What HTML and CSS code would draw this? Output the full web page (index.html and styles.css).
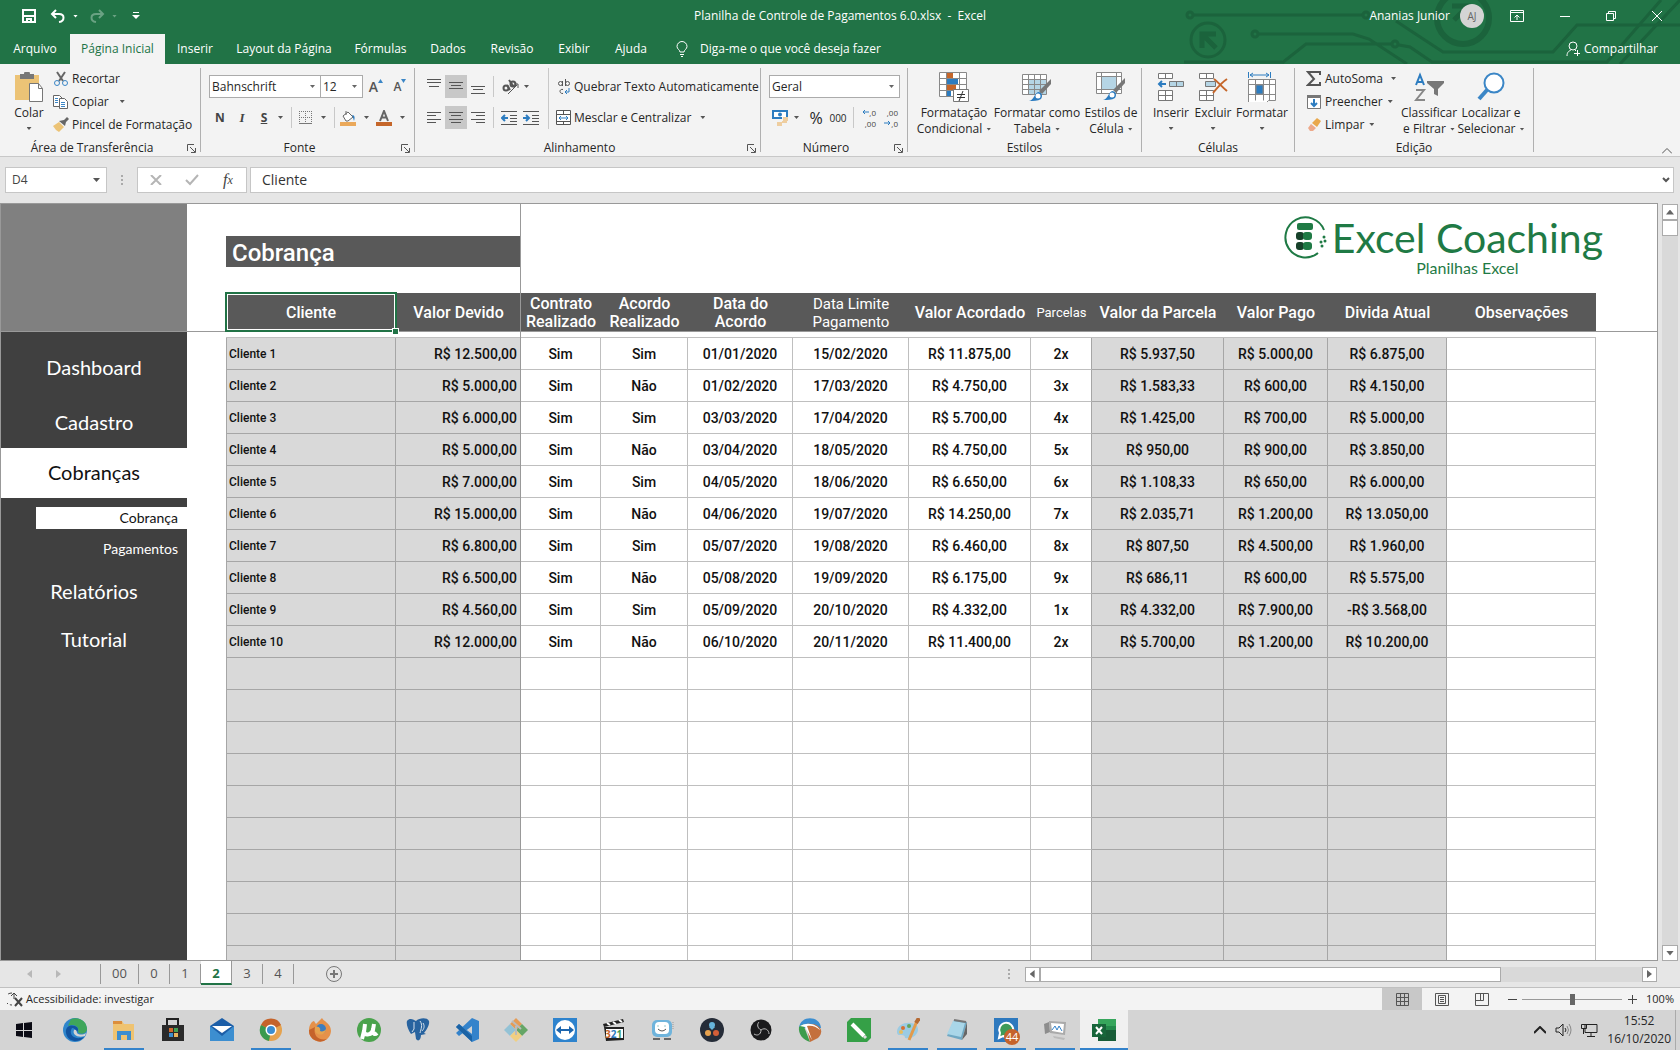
FILE: index.html
```html
<!DOCTYPE html>
<html lang="pt-BR">
<head>
<meta charset="utf-8">
<title>Planilha de Controle de Pagamentos 6.0.xlsx - Excel</title>
<link rel="stylesheet" href="styles.css">
</head>
<body>
<header class="top">
  <svg class="circuit" width="500" height="64" viewBox="1180 0 500 64" fill="none" stroke="#1b633c" stroke-width="3">
    <circle cx="1190" cy="15" r="3"/><path d="M1194 15H1363"/><circle cx="1366" cy="15" r="3"/>
    <path d="M1396 21l12 8 35 23h110l24-27h103" /><circle cx="1255" cy="34" r="3"/>
    <path d="M1259 34h94l16 5 38 25M1282 63l24-19h86"/><circle cx="1395" cy="44" r="3"/>
    <path d="M1399 45l11 2 22 15h175l54-62M1620 64l60-64M1184 62h98"/>
    <circle cx="1208" cy="40" r="17"/><circle cx="1463" cy="18" r="26" stroke-width="6"/>
    <path d="M1202 48V34h14M1202 34l14 14M1452 6h16v16M1468 6l-14 14" stroke-width="5"/>
  </svg>
  <div class="titlebar">
    <div class="quick">
      <button aria-label="Salvar"><svg width="14" height="14" fill="none" stroke="#fff" stroke-width="2"><path d="M1 1h12v12H1zM2 7h10"/><path d="M5 13v-3h4v3" /></svg></button>
      <button aria-label="Desfazer"><svg width="16" height="14" fill="none" stroke="#fff" stroke-width="2"><path d="M6 1L2 5l4 4M2 5h7c6 0 6 7 0 8"/></svg></button>
      <i class="caret light"></i>
      <button class="dim" aria-label="Refazer"><svg width="16" height="14" fill="none" stroke="#6aa283" stroke-width="2"><path d="M10 1l4 4-4 4M14 5H7C1 5 1 12 7 13"/></svg></button>
      <i class="caret dimmed"></i>
      <button aria-label="Personalizar"><svg width="8" height="8" fill="#fff"><path d="M1 0h6v1H1zM0 3h8L4 7z"/></svg></button>
    </div>
    <div class="doc">Planilha de Controle de Pagamentos 6.0.xlsx &nbsp;-&nbsp; Excel</div>
    <div class="window">
      <span>Ananias Junior</span><span class="avatar">AJ</span>
      <button aria-label="Opções da faixa"><svg width="14" height="12" fill="none" stroke="#fff"><path d="M.5 .5h13v11H.5zM.5 2.500h13M7 10V5M4.500 7.500L7 5l2.500 2.500"/></svg></button>
      <button aria-label="Minimizar"><svg width="10" height="10" stroke="#fff"><path d="M0 5.500h10"/></svg></button>
      <button aria-label="Restaurar"><svg width="10" height="10" fill="none" stroke="#fff"><path d="M.5 2.500h7v7h-7zM2.500 2.500v-2h7v7h-2"/></svg></button>
      <button aria-label="Fechar"><svg width="10" height="10" stroke="#fff"><path d="M0 0l10 10M10 0L0 10"/></svg></button>
    </div>
  </div>
  <nav class="tabs">
    <button>Arquivo</button><button class="active">Página Inicial</button><button>Inserir</button><button>Layout da Página</button><button>Fórmulas</button><button>Dados</button><button>Revisão</button><button>Exibir</button><button>Ajuda</button>
    <button class="tell"><svg width="12" height="17" fill="none" stroke="#fff"><path d="M4 11C4 9 1 8 1 5.500a5 5 0 0110 0C11 8 8 9 8 11zM4 13.500h4M5 15.500h2"/></svg>Diga-me o que você deseja fazer</button>
    <button class="share"><svg width="14" height="16" fill="none" stroke="#fff"><circle cx="7" cy="5" r="4"/><path d="M1 15c0-4 2-5 4-6M9 9l1 1M11.500 9v6M8 12.500h6"/></svg>Compartilhar</button>
  </nav>
</header>

<section class="ribbon">
  <div class="group clipboard">
    <div class="tools">
      <button class="big"><svg width="30" height="30" viewBox="0 0 30 30"><path d="M1 3h24v25H1z" fill="#ecc376"/><path d="M6 2h4a3 3 0 016 0h4v5H6z" fill="#777"/><path d="M15.500 11.500h9l4 5v13h-13z" fill="#fff" stroke="#777"/><path d="M24.500 11.500v5h4" fill="none" stroke="#777"/></svg><span>Colar</span><i class="caret"></i></button>
      <div class="list">
        <button><svg width="16" height="16" fill="none" stroke="#666" stroke-width="2"><path d="M4 1l6 9M12 1l-6 9"/><g stroke="#3b86c6" stroke-width="1"><circle cx="4" cy="12" r="2.500"/><circle cx="12" cy="12" r="2.500"/></g></svg>Recortar</button>
        <button><svg width="16" height="16" fill="#fff" stroke="#666"><path d="M.5 1.500h6l3 3v8h-9z"/><path d="M6.500 4.500h5l3 3v7h-8z"/><path d="M2 4.500h3M2 6.500h3M2 8.500h3M8 8.500h4M8 10.500h4M8 12.500h4" stroke="#3b86c6"/></svg>Copiar<i class="caret"></i></button>
        <button><svg width="16" height="16"><path d="M0 9l6-4 5 5-5 5-3-2z" fill="#ecc376"/><path d="M6 4l6 5 1-4 3-3-2-2-3 3z" fill="#666"/></svg>Pincel de Formatação</button>
      </div>
    </div>
    <div class="caption">Área de Transferência<svg class="launch" width="9" height="9"><path d="M.5 7V.5H7M3 3l5 5M8.500 4v4.500H4" fill="none" stroke="#555"/></svg></div>
  </div>

  <div class="group font">
    <div class="tools rows">
      <div class="row">
        <label class="combo face"><select aria-label="Fonte"><option>Bahnschrift</option></select></label>
        <label class="combo size"><select aria-label="Tamanho"><option>12</option></select></label>
        <button class="w26 grow">A<svg width="5" height="4"><path d="M0 4h5L2.500 0z" fill="#3b86c6"/></svg></button>
        <button class="w22 shrink">A<svg width="5" height="4"><path d="M0 0h5L2.500 4z" fill="#3b86c6"/></svg></button>
      </div>
      <div class="row">
        <button class="w22 strong">N</button><button class="w22 ital">I</button><button class="w22 under">S</button><i class="caret"></i><i class="sep"></i>
        <button class="w26" aria-label="Bordas"><svg width="13" height="13" stroke="#777" fill="none"><path d="M0 .5h13M.5 0v13M6.500 0v13M12.500 0v13M0 6.500h13" stroke-dasharray="1 1"/><path d="M0 12.500h13"/></svg></button><i class="caret"></i><i class="sep"></i>
        <button class="w26" aria-label="Preenchimento"><svg width="16" height="16"><path d="M3 6l5-4 5 5-5 4H6zM6 5V1" fill="#fff" stroke="#666"/><path d="M12 5c3 0 3 3 2 6-1-3-1-4-2-6z" fill="#2c7cc0"/><path d="M0 12h16v4H0z" fill="#eaa85a"/></svg></button><i class="caret"></i>
        <button class="w26" aria-label="Cor da fonte"><svg width="16" height="16"><path d="M4 11L8 1l4 10M5.500 7.500h5" fill="none" stroke="#666" stroke-width="2"/><path d="M0 12h16v4H0z" fill="#c5662a"/></svg></button><i class="caret"></i>
      </div>
    </div>
    <div class="caption">Fonte<svg class="launch" width="9" height="9"><path d="M.5 7V.5H7M3 3l5 5M8.500 4v4.500H4" fill="none" stroke="#555"/></svg></div>
  </div>

  <div class="group align">
    <div class="tools">
      <div class="rows">
        <div class="row">
          <button class="w22"><svg width="14" height="15" stroke="#555"><path d="M0 3.500h14M2 7.500h10M0 .5h14"/></svg></button>
          <button class="w22 on"><svg width="14" height="13" stroke="#555"><path d="M0 2.500h14M2 5.500h10M0 8.500h14"/></svg></button>
          <button class="w22"><svg width="14" height="15" stroke="#555"><path d="M0 7.500h14M2 10.500h10M0 14.500h14"/></svg></button><i class="sep"></i>
          <button class="w26"><svg width="18" height="16" fill="none" stroke="#555" stroke-width="2"><circle cx="4" cy="9" r="2.500"/><path d="M5 6l3 5M7 1l5 7"/><circle cx="11" cy="5" r="2.500"/><path d="M6 15l9-9M12 5h4v4" stroke-width="1"/></svg></button><i class="caret"></i>
        </div>
        <div class="row">
          <button class="w22"><svg width="14" height="13" stroke="#555"><path d="M0 1.500h14M0 4.500h9M0 8.500h14M0 11.500h9"/></svg></button>
          <button class="w22 on"><svg width="14" height="13" stroke="#555"><path d="M0 1.500h14M2 4.500h10M0 8.500h14M2 11.500h10"/></svg></button>
          <button class="w22"><svg width="14" height="13" stroke="#555"><path d="M0 1.500h14M5 4.500h9M0 8.500h14M5 11.500h9"/></svg></button><i class="sep"></i>
          <button class="w22"><svg width="16" height="14" stroke="#555"><path d="M0 .5h16M9 4.500h7M9 7.500h7M9 10.500h7M0 13.500h16"/><path d="M7 7H1M4 4L1 7l3 3" fill="none" stroke="#2c7cc0" stroke-width="2"/></svg></button>
          <button class="w22"><svg width="16" height="14" stroke="#555"><path d="M0 .5h16M9 4.500h7M9 7.500h7M9 10.500h7M0 13.500h16"/><path d="M0 7h6M3 4l3 3-3 3" fill="none" stroke="#2c7cc0" stroke-width="2"/></svg></button>
        </div>
      </div>
      <div class="rows wrapmerge">
        <button class="row"><svg width="16" height="16" fill="none" stroke="#555"><circle cx="4.500" cy="4.500" r="2"/><path d="M6.500 2v5M9.500 0v7M7 10.500c-4-1-4 4.500 0 4" /><circle cx="11.500" cy="4.500" r="2"/><path d="M13 9v4H9M11 11l-2 2 2 2" stroke="#2c7cc0"/></svg>Quebrar Texto Automaticamente</button>
        <button class="row"><svg width="16" height="16" fill="#fff" stroke="#555"><path d="M.5 .5h14v14H.5zM.5 4.500h14M.5 11.500h14M7.500 .5v4M7.500 11.500v3"/><path d="M3 8h9M5 6L3 8l2 2M10 6l2 2-2 2" fill="none" stroke="#2c7cc0"/></svg>Mesclar e Centralizar<i class="caret"></i></button>
      </div>
    </div>
    <div class="caption">Alinhamento<svg class="launch" width="9" height="9"><path d="M.5 7V.5H7M3 3l5 5M8.500 4v4.500H4" fill="none" stroke="#555"/></svg></div>
  </div>

  <div class="group number">
    <div class="tools rows">
      <div class="row"><label class="combo general"><select aria-label="Formato"><option>Geral</option></select></label></div>
      <div class="row">
        <button class="w22"><svg width="16" height="16"><path d="M1 1h14v7H1z" fill="#fff" stroke="#2c7cc0" stroke-width="2"/><circle cx="8" cy="4.500" r="2" fill="#2c7cc0"/><path d="M10 7h6v6h-3v3H5v-4h5z" fill="#f3f3f3"/><path d="M11 8h5M11 10h5M10 12h5M5 13h5M5 15h5" stroke="#e9a84c"/></svg></button><i class="caret"></i>
        <button class="w22 pct">%</button><button class="w22 thou">000</button><i class="sep"></i>
        <button class="w22 dec"><span><svg width="7" height="6"><path d="M7 3H1M3 1L1 3l2 2" fill="none" stroke="#2c7cc0"/></svg>,0</span><span>,00</span></button>
        <button class="w22 dec"><span>,00</span><span><svg width="7" height="6"><path d="M0 3h6M4 1l2 2-2 2" fill="none" stroke="#2c7cc0"/></svg>,0</span></button>
      </div>
    </div>
    <div class="caption">Número<svg class="launch" width="9" height="9"><path d="M.5 7V.5H7M3 3l5 5M8.500 4v4.500H4" fill="none" stroke="#555"/></svg></div>
  </div>

  <div class="group styles">
    <div class="tools">
      <button class="big"><svg width="30" height="30"><path d="M.5 .5h27v24H.5zM.5 6.500h27M.5 12.500h27M.5 18.500h27M7.500 .5v24M20.500 .5v24" fill="#fff" stroke="#888"/><path d="M8 1h6v5H8zM8 13h9v5H8z" fill="#c5662a"/><path d="M8 7h11v5H8zM8 19h4v5H8z" fill="#2c7cc0"/><path d="M14.500 17.500h15v12h-15z" fill="#fff" stroke="#777"/><path d="M18 22.500h8M18 25.500h8M24 19l-4 10" stroke="#333"/></svg><span>Formatação</span><span>Condicional<i class="caret"></i></span></button>
      <button class="big"><svg width="30" height="30"><path d="M.5 2.500h24v20H.5z" fill="#fff"/><path d="M7 8h17v14H7z" fill="#b5d5e5"/><path d="M.5 2.500h24v20H.5zM.5 7.500h24M.5 12.500h24M.5 17.500h24M6.500 2.500v20M12.500 2.500v20M18.500 2.500v20" fill="none" stroke="#888"/><path d="M29 7v5l-9 10-3-3z" fill="#777"/><path d="M7 29c5-1 5-7 9-9 4 0 5 4 3 7-3 2-8 2-12 2z" fill="#2c7cc0"/><circle cx="16" cy="24" r="2.500" fill="#fff"/></svg><span>Formatar como</span><span>Tabela<i class="caret"></i></span></button>
      <button class="big"><svg width="30" height="30"><path d="M.5 .5h25v21H.5zM.5 4.500h25M.5 17.500h25M5.500 .5v21M20.500 .5v21" fill="#fff" stroke="#888"/><path d="M6 5h14v12H6z" fill="#b5d5e5"/><path d="M29 6v5l-9 10-3-3z" fill="#777"/><path d="M7 28c5-1 5-7 9-9 4 0 5 4 3 7-3 2-8 2-12 2z" fill="#2c7cc0"/><circle cx="16" cy="23" r="2.500" fill="#fff"/></svg><span>Estilos de</span><span>Célula<i class="caret"></i></span></button>
    </div>
    <div class="caption">Estilos</div>
  </div>

  <div class="group cells">
    <div class="tools">
      <button class="big"><svg width="28" height="30" fill="#fff" stroke="#777"><path d="M1.500 1.500h14v5h-14zM8.500 1.500v5M1.500 18.500h14v10h-14zM1.500 23.500h14M8.500 18.500v10"/><path d="M12.500 9.500h14v5h-14zM19.500 9.500v5" fill="#b5d5e5"/><path d="M9 12H3M5 9l-3 3 3 3" stroke="#2c7cc0" fill="none" stroke-width="2"/></svg><span>Inserir</span><i class="caret"></i></button>
      <button class="big"><svg width="30" height="30" fill="#fff" stroke="#777"><path d="M1.500 1.500h14v5h-14zM8.500 1.500v5M1.500 18.500h14v10h-14zM1.500 23.500h14M8.500 18.500v10"/><path d="M7.500 9.500h10v5h-10z" fill="#b5d5e5"/><path d="M16 7c4 3 8 8 13 12M29 7c-6 4-9 8-14 14" stroke="#c5662a" stroke-width="2" fill="none"/></svg><span>Excluir</span><i class="caret"></i></button>
      <button class="big"><svg width="28" height="32" fill="none" stroke="#888"><path d="M.5 7.500h27v21h-7l-3 3H.5zM.5 12.500h27M.5 22.500h27M7.500 7.500v21M15.500 7.500v21M21.500 7.500v21" fill="#fff"/><path d="M8 13h7v9H8z" fill="#2c7cc0"/><path d="M.5 0v6M22.500 0v6M2 3h19M5 1L2 3l3 2M18 1l3 2-3 2" stroke="#2c7cc0"/></svg><span>Formatar</span><i class="caret"></i></button>
    </div>
    <div class="caption">Células</div>
  </div>

  <div class="group edit">
    <div class="tools">
      <div class="list">
        <button class="wide"><svg width="16" height="16"><path d="M14 4V1H2l6 7-6 6h12v-3" fill="none" stroke="#555" stroke-width="2"/></svg>AutoSoma<i class="caret"></i></button>
        <button><svg width="16" height="16"><path d="M1.500 1.500h13v13h-13z" fill="#fff" stroke="#777"/><path d="M1 1h14v3H1z" fill="#777"/><path d="M8 5v7M5 9l3 3 3-3" fill="none" stroke="#2c7cc0" stroke-width="2"/></svg>Preencher<i class="caret"></i></button>
        <button><svg width="16" height="16"><path d="M6 6l5-5 4 3-4 6z" fill="#e9a84c"/><path d="M5 7l5 4-3 3H4l-2-3z" fill="#eda98a"/></svg>Limpar<i class="caret"></i></button>
      </div>
      <button class="big"><svg width="30" height="30"><path d="M2 13L6 3l4 10M3 10h6" stroke="#2c7cc0" fill="none" stroke-width="2"/><path d="M2 18h8L2 28h9" stroke="#888" fill="none" stroke-width="2"/><path d="M13 9h17v2l-6 6v7l-4-2v-5l-7-6z" fill="#777"/></svg><span>Classificar</span><span>e Filtrar<i class="caret"></i></span></button>
      <button class="big"><svg width="30" height="30"><circle cx="18" cy="11" r="9.500" fill="#fff" stroke="#3b86c6" stroke-width="2"/><path d="M11 18l-8 9" stroke="#3b86c6" stroke-width="4"/></svg><span>Localizar e</span><span>Selecionar<i class="caret"></i></span></button>
    </div>
    <div class="caption">Edição</div>
  </div>
  <button class="collapse" aria-label="Recolher"><svg width="10" height="6"><path d="M0 5.500l5-5 5 5" fill="none" stroke="#555"/></svg></button>
</section>

<section class="formula">
  <label class="namebox"><input value="D4" aria-label="Caixa de nome"><i class="caret large"></i></label>
  <span class="dots"></span>
  <div class="fx">
    <button aria-label="Cancelar"><svg width="12" height="10" stroke="#b5b5b5" stroke-width="2"><path d="M1 0l10 10M11 0L1 10"/></svg></button>
    <button aria-label="Inserir"><svg width="14" height="12" stroke="#b5b5b5" stroke-width="2" fill="none"><path d="M1 6l4 4 8-9"/></svg></button>
    <button class="func">f<small>x</small></button>
  </div>
  <label class="bar"><input value="Cliente" aria-label="Barra de fórmulas"><svg width="8" height="6"><path d="M1 1l3 3 3-3" fill="none" stroke="#555" stroke-width="2"/></svg></label>
</section>

<main class="workspace">
  <div class="sheet">
    <aside class="side">
      <div class="block"></div>
      <nav>
        <a href="#d">Dashboard</a><a href="#c">Cadastro</a><a class="current" href="#b">Cobranças</a>
        <a class="sub current" href="#b1">Cobrança</a><a class="sub" href="#b2">Pagamentos</a>
        <a href="#r">Relatórios</a><a href="#t">Tutorial</a>
      </nav>
    </aside>
    <div class="content">
      <div class="heading">
        <h1>Cobrança</h1>
        <div class="logo">
          <svg width="44" height="44" viewBox="0 0 44 44"><path d="M40 15A20 20 0 1 0 34 38" fill="none" stroke="#1f7a45" stroke-width="2"/><g fill="#1f7a45"><rect x="13" y="8" width="16" height="7" rx="2"/><rect x="12" y="17" width="8" height="8" rx="3" fill="#17412a"/><rect x="19" y="17" width="9" height="8" rx="3"/><rect x="12" y="27" width="8" height="8" rx="3" fill="#17412a"/><rect x="19" y="27" width="9" height="8" rx="3"/><circle cx="40" cy="22" r="1.500"/><circle cx="41" cy="26" r="1.500"/><circle cx="37" cy="27" r="1.500"/><circle cx="38" cy="31" r="1.500"/></g></svg>
          <div><strong>Excel Coaching</strong><span>Planilhas Excel</span></div>
        </div>
      </div>
      <table>
        <colgroup><col class="c1"><col class="c2"><col class="c3"><col class="c4"><col class="c5"><col class="c6"><col class="c7"><col class="c8"><col class="c9"><col class="c10"><col class="c11"><col></colgroup>
        <thead>
          <tr><th class="selected">Cliente</th><th>Valor Devido</th><th>Contrato Realizado</th><th>Acordo Realizado</th><th>Data do Acordo</th><th class="mid">Data Limite Pagamento</th><th>Valor Acordado</th><th class="tiny">Parcelas</th><th>Valor da Parcela</th><th>Valor Pago</th><th>Divida Atual</th><th>Observações</th></tr>
          <tr class="gap"><td colspan="12"></td></tr>
        </thead>
        <tbody>
          <tr><td>Cliente 1</td><td>R$ 12.500,00</td><td>Sim</td><td>Sim</td><td>01/01/2020</td><td>15/02/2020</td><td>R$ 11.875,00</td><td>2x</td><td>R$ 5.937,50</td><td>R$ 5.000,00</td><td>R$ 6.875,00</td><td></td></tr>
          <tr><td>Cliente 2</td><td>R$ 5.000,00</td><td>Sim</td><td>Não</td><td>01/02/2020</td><td>17/03/2020</td><td>R$ 4.750,00</td><td>3x</td><td>R$ 1.583,33</td><td>R$ 600,00</td><td>R$ 4.150,00</td><td></td></tr>
          <tr><td>Cliente 3</td><td>R$ 6.000,00</td><td>Sim</td><td>Sim</td><td>03/03/2020</td><td>17/04/2020</td><td>R$ 5.700,00</td><td>4x</td><td>R$ 1.425,00</td><td>R$ 700,00</td><td>R$ 5.000,00</td><td></td></tr>
          <tr><td>Cliente 4</td><td>R$ 5.000,00</td><td>Sim</td><td>Não</td><td>03/04/2020</td><td>18/05/2020</td><td>R$ 4.750,00</td><td>5x</td><td>R$ 950,00</td><td>R$ 900,00</td><td>R$ 3.850,00</td><td></td></tr>
          <tr><td>Cliente 5</td><td>R$ 7.000,00</td><td>Sim</td><td>Sim</td><td>04/05/2020</td><td>18/06/2020</td><td>R$ 6.650,00</td><td>6x</td><td>R$ 1.108,33</td><td>R$ 650,00</td><td>R$ 6.000,00</td><td></td></tr>
          <tr><td>Cliente 6</td><td>R$ 15.000,00</td><td>Sim</td><td>Não</td><td>04/06/2020</td><td>19/07/2020</td><td>R$ 14.250,00</td><td>7x</td><td>R$ 2.035,71</td><td>R$ 1.200,00</td><td>R$ 13.050,00</td><td></td></tr>
          <tr><td>Cliente 7</td><td>R$ 6.800,00</td><td>Sim</td><td>Sim</td><td>05/07/2020</td><td>19/08/2020</td><td>R$ 6.460,00</td><td>8x</td><td>R$ 807,50</td><td>R$ 4.500,00</td><td>R$ 1.960,00</td><td></td></tr>
          <tr><td>Cliente 8</td><td>R$ 6.500,00</td><td>Sim</td><td>Não</td><td>05/08/2020</td><td>19/09/2020</td><td>R$ 6.175,00</td><td>9x</td><td>R$ 686,11</td><td>R$ 600,00</td><td>R$ 5.575,00</td><td></td></tr>
          <tr><td>Cliente 9</td><td>R$ 4.560,00</td><td>Sim</td><td>Sim</td><td>05/09/2020</td><td>20/10/2020</td><td>R$ 4.332,00</td><td>1x</td><td>R$ 4.332,00</td><td>R$ 7.900,00</td><td>-R$ 3.568,00</td><td></td></tr>
          <tr><td>Cliente 10</td><td>R$ 12.000,00</td><td>Sim</td><td>Não</td><td>06/10/2020</td><td>20/11/2020</td><td>R$ 11.400,00</td><td>2x</td><td>R$ 5.700,00</td><td>R$ 1.200,00</td><td>R$ 10.200,00</td><td></td></tr>
          <tr><td></td><td></td><td></td><td></td><td></td><td></td><td></td><td></td><td></td><td></td><td></td><td></td></tr>
          <tr><td></td><td></td><td></td><td></td><td></td><td></td><td></td><td></td><td></td><td></td><td></td><td></td></tr>
          <tr><td></td><td></td><td></td><td></td><td></td><td></td><td></td><td></td><td></td><td></td><td></td><td></td></tr>
          <tr><td></td><td></td><td></td><td></td><td></td><td></td><td></td><td></td><td></td><td></td><td></td><td></td></tr>
          <tr><td></td><td></td><td></td><td></td><td></td><td></td><td></td><td></td><td></td><td></td><td></td><td></td></tr>
          <tr><td></td><td></td><td></td><td></td><td></td><td></td><td></td><td></td><td></td><td></td><td></td><td></td></tr>
          <tr><td></td><td></td><td></td><td></td><td></td><td></td><td></td><td></td><td></td><td></td><td></td><td></td></tr>
          <tr><td></td><td></td><td></td><td></td><td></td><td></td><td></td><td></td><td></td><td></td><td></td><td></td></tr>
          <tr><td></td><td></td><td></td><td></td><td></td><td></td><td></td><td></td><td></td><td></td><td></td><td></td></tr>
          <tr><td></td><td></td><td></td><td></td><td></td><td></td><td></td><td></td><td></td><td></td><td></td><td></td></tr>
        </tbody>
      </table>
    </div>
    <i class="freeze-h"></i><i class="freeze-v"></i>
  </div>
  <div class="vscroll"><button aria-label="Acima"><i class="tri up"></i></button><div class="thumb"></div><span class="track"></span><button aria-label="Abaixo"><i class="tri down"></i></button></div>
</main>

<section class="sheetbar">
  <div class="arrows"><i class="tri left faint"></i><i class="tri right faint"></i></div>
  <div class="sheets"><button class="double">00</button><button>0</button><button>1</button><button class="active">2</button><button>3</button><button>4</button></div>
  <button class="add" aria-label="Nova planilha"><svg width="16" height="16" fill="none" stroke="#777"><circle cx="8" cy="8" r="7.500"/><path d="M8 4v8M4 8h8" stroke-width="2"/></svg></button>
  <span class="dots push"></span>
  <div class="hscroll"><button aria-label="Esquerda"><i class="tri left"></i></button><div class="thumb"></div><span class="track"></span><button aria-label="Direita"><i class="tri right"></i></button></div>
</section>

<section class="status">
  <svg width="17" height="15" fill="none" stroke="#444"><path d="M5 1a7 6 0 000 12" stroke-dasharray="4 2"/><path d="M7 1v6M4 4l3-3 3 3" /><path d="M8 6l7 8M15 6l-7 8" stroke-width="2"/></svg>
  <span>Acessibilidade: investigar</span>
  <div class="views">
    <button class="on" aria-label="Normal"><svg width="13" height="13" fill="none" stroke="#555"><path d="M.5 .5h12v12H.5zM.5 4.500h12M.5 8.500h12M4.500 .5v12M8.500 .5v12"/></svg></button>
    <button aria-label="Layout"><svg width="14" height="13" fill="none" stroke="#555"><path d="M.5 .5h13v12H.5zM3.500 2.500h7v8h-7zM5 4.500h4M5 6.500h4M5 8.500h4"/></svg></button>
    <button aria-label="Quebra"><svg width="14" height="13" fill="none" stroke="#555"><path d="M.5 .5h13v12H.5zM5.500 .5v7M.5 7.500h8v-7"/></svg></button>
  </div>
  <button class="zoomb" aria-label="Menos"><svg width="9" height="9" stroke="#444"><path d="M0 4.500h9"/></svg></button>
  <input type="range" min="0" max="100" value="50" aria-label="Zoom">
  <button class="zoomb" aria-label="Mais"><svg width="9" height="9" stroke="#444"><path d="M0 4.500h9M4.500 0v9"/></svg></button>
  <span class="pct100">100%</span>
</section>

<footer class="taskbar">
  <button class="start"><svg width="16" height="16" fill="#0b0b14"><path d="M0 2l7-1v7H0zM8 1l8-1v8H8zM0 9h7v6l-7-1zM8 9h8v7l-8-1z"/></svg></button>
  <button><svg width="24" height="24"><circle cx="12" cy="12" r="12" fill="#2f86cc"/><path d="M8 1c9-3 16 3 16 10 0 5-7 6-9 3 2-5-4-9-10-6z" fill="#3fa65a"/><path d="M9 10c-4 6 2 13 12 9-4 6-16 6-18-4-1-5 3-9 9-7 3 1 4 4 2 6-1-2-3-4-5-4z" fill="#1254a0"/><path d="M11 12c1-1 3 0 3 3 2 2 6 2 9 0l-1 3c-7 2-13-1-11-6z" fill="#d4d4d4"/></svg></button>
  <button class="open"><svg width="24" height="22"><path d="M1 2h9l2 3h10v16H1z" fill="#efc371"/><path d="M1 2h9v3H1z" fill="#dc8e3c"/><path d="M5 12h14v9h-4v-5H9v5H5z" fill="#3c8ed0"/></svg></button>
  <button><svg width="24" height="24"><path d="M6 7V1h11v6" fill="none" stroke="#222" stroke-width="2"/><path d="M1 7h22v16H1z" fill="#2a2a2a"/><path d="M8 10h4v4H8z" fill="#d2682c"/><path d="M13 10h4v4h-4z" fill="#43a052"/><path d="M8 15h4v4H8z" fill="#3c8ed0"/><path d="M13 15h4v4h-4z" fill="#eab35c"/></svg></button>
  <button><svg width="24" height="24"><path d="M0 8l12-8 12 8v15H0z" fill="#1c5ea8"/><path d="M0 8v15h24V8L12 18z" fill="#3c8ed0"/><path d="M2 8h20l-10 7z" fill="#fff"/></svg></button>
  <button class="open"><svg width="24" height="24"><circle cx="12" cy="12" r="11" fill="#e5a24e"/><path d="M12 12L2 7A11 11 0 0122 7z" fill="#c5632b"/><path d="M12 12L2 7a11 11 0 008 16z" fill="#3a9a4e"/><circle cx="12" cy="12" r="5.500" fill="#fff"/><circle cx="12" cy="12" r="4" fill="#3c8ed0"/></svg></button>
  <button><svg width="24" height="24"><path d="M1 12C1 7 4 3 6 3l2 3 6-6c1 3 9 5 9 13a11 11 0 01-22-1z" fill="#e5914a"/><path d="M1 12a11 11 0 0018 9C10 23 5 17 7 9z" fill="#c5632b"/><circle cx="13" cy="11" r="5" fill="#3c7dc0"/><path d="M7 9c4-1 6 1 5 4 2 1 5 0 6-2 0 6-8 8-11 2z" fill="#e5a24e"/></svg></button>
  <button><svg width="24" height="24"><circle cx="12" cy="12" r="12" fill="#4aa34c"/><path d="M8 6l-1 8c1 4 8 3 9-2l1-6M16 11c-1 5 2 6 4 4M7 13L5 21" fill="none" stroke="#fff" stroke-width="4"/></svg></button>
  <button><svg width="24" height="24"><path d="M1 3c3-4 7-1 9 0 3-3 11-4 13 0 1 4-3 10-5 12l2 1-5 1c0 5-3 7-5 4l-1-7-4 2C2 12 0 6 1 3z" fill="#28639f"/><path d="M8 4v7l-2 3M14 3c3 4 1 8 0 12M17 5c2 3 1 6-1 8" fill="none" stroke="#d4e0ea"/></svg></button>
  <button><svg width="24" height="24"><path d="M17 0l7 3v18l-7 3L1 9l3-3 13 10V8L4 18l-3-3z" fill="#3483cb"/><path d="M1 9l3-3 13 12v6z" fill="#1b63a5"/></svg></button>
  <button><svg width="24" height="24"><path d="M12 0l6 6-6 6-6-6z" fill="#e59c56"/><path d="M6 6l6 6-6 6-6-6z" fill="#93c2d5"/><path d="M18 6l6 6-6 6-6-6z" fill="#65a667"/><path d="M12 12l6 6-6 6-6-6z" fill="#f0cf82"/><path d="M8 3l9 8M12 8v9" stroke="#bbb" stroke-width="2"/></svg></button>
  <button><svg width="24" height="24"><path d="M0 0h24v24H0z" fill="#2e83cd"/><circle cx="12" cy="12" r="10" fill="#fff"/><path d="M3 12l5-4v3h8V8l5 4-5 4v-3H8v3z" fill="#1b65ae"/></svg></button>
  <button><svg width="24" height="24"><path d="M1 6l20-5 1 3-20 5zM2 9h20v13l-18 1z" fill="#222"/><path d="M4 11h17v9H4z" fill="#fff"/><path d="M5 5l3 2M11 4l3 2M17 2l3 2" stroke="#fff" stroke-width="2"/></svg><span class="clap"><b>3</b><b>2</b><b>1</b></span></button>
  <button><svg width="24" height="24"><rect x="1" y="2" width="20" height="17" rx="5" fill="#6fb4dc"/><rect x="4" y="4" width="14" height="12" rx="4" fill="#fff"/><path d="M7 11q4 4 8 0" stroke="#555" fill="none"/><path d="M7 7v2M14 7v2" stroke="#9cc" stroke-width="1"/><path d="M2 21h7M13 21h7" stroke="#666" stroke-width="2"/><path d="M22 4v8" stroke="#999" stroke-dasharray="1 1"/></svg></button>
  <button><svg width="24" height="24"><circle cx="12" cy="12" r="12" fill="#252c38"/><circle cx="12" cy="7" r="3" fill="#66b4da"/><path d="M12 12L9 9h6z" fill="#66b4da"/><circle cx="8" cy="15" r="3" fill="#e6a14d"/><circle cx="16" cy="15" r="3" fill="#d35e38"/></svg></button>
  <button><svg width="22" height="22"><circle cx="11" cy="11" r="10.500" fill="#1b1b1d"/><path d="M11 11C7 9 7 5 9 3M11 11c4-3 8 0 8 4M11 11c0 5-4 6-7 4" fill="none" stroke="#bbb"/></svg></button>
  <button><svg width="24" height="24"><path d="M1 10C2-3 22-3 23 10z" fill="#3c8ed0"/><path d="M1 9l4-3 7 18C5 22 0 16 1 9z" fill="#3d9c4d"/><path d="M8 6c12-2 20 6 12 14l-8 4z" fill="#c4703d"/><path d="M2 8c8-5 18-1 20 4-4-4-9-5-13-4l5 14L7 9z" fill="#fff"/></svg></button>
  <button><svg width="24" height="24"><path d="M4 0h20v20l-4 4H0V4z" fill="#35a047"/><path d="M5 6l12 12" stroke="#fff" stroke-width="4"/><path d="M17 18l2 2" stroke="#ddd" stroke-width="3"/></svg></button>
  <button class="open"><svg width="24" height="24"><path d="M1 13C2 5 15 2 21 8c4 6-4 14-12 12 0-3-2-3-5-3s-3-2-3-4z" fill="#9bcbe3"/><circle cx="7" cy="10" r="2" fill="#d86e31"/><circle cx="13" cy="8" r="2" fill="#61a45d"/><circle cx="5" cy="14" r="2" fill="#e9bd5d"/><path d="M21 3l-8 19" stroke="#e39a4a" stroke-width="3"/><path d="M20 5l3-5" stroke="#b56a33" stroke-width="4"/></svg></button>
  <button class="open"><svg width="24" height="24"><path d="M9 2l13 2-5 18-15-4z" fill="#6fa8c3"/><path d="M8 3l12 2-4 14-14-3z" fill="#a9d6e8"/><path d="M22 4v12l-5 6z" fill="#666"/><path d="M9 2l12 2" stroke="#777" stroke-width="2"/></svg></button>
  <button class="open"><svg width="24" height="24"><path d="M0 0h24v24H0z" fill="#2e79be"/><path d="M5 20l1-5a7 7 0 113 3z" fill="#3f9b59" stroke="#fff" stroke-width="2"/></svg><span class="badge">44</span></button>
  <button class="open"><svg width="24" height="24"><path d="M1 6l5-2 1 10-5 2z" fill="#8d8d8d"/><path d="M6 3l17 1-1 13-15-2z" fill="#aaa"/><path d="M8 5l13 1-1 9-11-2z" fill="#fff"/><path d="M9 12l3-4 2 4 2-4 3 5" stroke="#3483cb" fill="none"/><path d="M10 18l12 2-1 2-10-2z" fill="#bbb"/></svg></button>
  <button class="open active"><svg width="24" height="22"><path d="M6 0h18v22H6z" fill="#238a4b"/><path d="M6 0h18v7H6z" fill="#36a65c"/><path d="M6 11h18v11H6z" fill="#185c37"/><path d="M0 5h14v13H0z" fill="#17653a"/><path d="M4 8l6 7M10 8l-6 7" stroke="#fff" stroke-width="2"/></svg></button>
  <div class="tray">
    <svg width="12" height="8"><path d="M0 7l6-6 6 6" fill="none" stroke="#222" stroke-width="2"/></svg>
    <svg width="17" height="14" fill="none" stroke="#222"><path d="M1 5h3l4-4v12L4 9H1z"/><path d="M10 5q2 2 0 4"/><path d="M12 3q3 4 0 8M14 1q4 6 0 12" stroke="#888"/></svg>
    <svg width="17" height="14" fill="none" stroke="#222"><path d="M4 1.500h12v8H4zM10 10v3M6 13.500h8M.5 1.500h5v4h-5zM2.500 6v5"/></svg>
    <div class="clock"><span>15:52</span><span>16/10/2020</span></div>
  </div>
</footer>
</body>
</html>
```
FILE: styles.css
```css
* { box-sizing: border-box; }
html, body { height: 100%; }
body {
  margin: 0; display: flex; flex-direction: column; overflow: hidden;
  font: 12px/16px "Open Sans", "Noto Sans", sans-serif; color: #262626; background: #e6e6e6;
}
button, input, select { font: inherit; color: inherit; background: none; border: 0; padding: 0; margin: 0; border-radius: 0; }
button { display: flex; align-items: center; justify-content: center; white-space: nowrap; }
svg { display: block; flex: none; }
input { outline: 0; min-width: 0; }

.caret { display: block; flex: none; width: 5px; height: 3px; background: #555; clip-path: polygon(0 0, 100% 0, 50% 100%); }
.caret.light { background: #fff; }
.caret.dimmed { background: #6aa283; }
.caret.large { width: 7px; height: 4px; }
.sep { flex: none; width: 1px; height: 21px; background: #c8c8c8; }

/* Title bar and tabs */
.top { position: relative; flex: none; background: #217346; color: #fff; }
.circuit { position: absolute; right: 0; top: 0; }
.titlebar { position: relative; display: grid; grid-template-columns: 1fr auto 1fr; align-items: center; height: 34px; padding-bottom: 2px; }
.quick { display: flex; align-items: center; padding-left: 22px; }
.quick button:nth-of-type(2) { margin-left: 14px; }
.quick .caret { margin-left: 7px; }
.quick button.dim { margin-left: 11px; }
.quick button:last-child { margin-left: 15px; }
.window { display: flex; align-items: center; justify-content: flex-end; padding-right: 18px; }
.avatar { display: grid; place-items: center; width: 24px; height: 24px; margin: 0 26px 0 10px; border-radius: 50%; background: #d4d4d4; color: #666; font-size: 10px; }
.window button + button { margin-left: 36px; }
.tabs { position: relative; display: grid; grid-template-columns: 70px 95px 60px 118px 75px 60px 68px 56px 58px auto 1fr; height: 30px; }
.tabs .active { background: #f3f3f3; color: #217346; }
.tabs .tell { gap: 12px; margin-left: 16px; }
.tabs .share { justify-content: flex-end; gap: 4px; padding-right: 22px; }

/* Ribbon */
.ribbon { display: flex; flex: none; height: 93px; padding-top: 4px; background: #f3f3f3; border-bottom: 1px solid #c8c8c8; }
.group { display: flex; flex-direction: column; flex: none; height: 84px; border-right: 1px solid #b0b0b0; }
.clipboard { width: 201px; }
.font { width: 214px; }
.align { width: 346px; }
.number { width: 147px; }
.styles { width: 234px; }
.cells { width: 153px; }
.edit { width: 239px; }
.tools { display: flex; flex: none; height: 72px; }
.caption { position: relative; height: 16px; text-align: center; margin: 0 16px 0 0; }
.styles .caption, .cells .caption, .edit .caption { margin-right: 0; }
.launch { position: absolute; right: -12px; top: 4px; }
.big { flex-direction: column; justify-content: flex-start; padding-top: 4px; }
.big > svg { margin-bottom: 3px; height: 30px; }
.big > span { display: flex; align-items: center; gap: 4px; }
.big > .caret { margin-top: 6px; }
.list { display: flex; flex-direction: column; }
.list button { height: 23px; justify-content: flex-start; gap: 3px; padding-bottom: 2px; }
.list .caret { margin-left: 2px; }
.clipboard .big { width: 53px; padding-left: 5px; }
.clipboard .list .caret { margin-left: 8px; }
.styles .tools { padding-left: 7px; }
.styles .big:nth-child(1) { width: 78px; }
.styles .big:nth-child(2) { width: 88px; }
.styles .big:nth-child(3) { width: 60px; }
.cells .tools { padding-left: 8px; }
.cells .big { width: 42px; }
.cells .big:nth-child(3) { width: 56px; }
.edit .tools { padding-left: 11px; }
.edit .list { width: 92px; }
.edit .list .wide .caret { margin-left: 5px; }
.edit .big { width: 62px; }

.rows { display: flex; flex-direction: column; padding-top: 7px; gap: 8px; }
.row { display: flex; align-items: center; height: 23px; }
.row button { height: 23px; }
.w22 { width: 22px; flex: none; }
.w26 { width: 26px; flex: none; }
.on { background: #c8c8c8; }
.font .tools { padding-left: 8px; }
.font .sep { margin-left: 8px; }
.font .w26 + .caret, .font .under + .caret { margin-left: 3px; }
.font .caret + .w26 { margin-left: 2px; }
.combo { position: relative; display: block; height: 23px; border: 1px solid #ababab; background: #fff; }
.combo select { appearance: none; width: 100%; height: 100%; padding-left: 2px; outline: 0; }
.combo::after { content: ""; position: absolute; right: 5px; top: 9px; width: 5px; height: 3px; background: #666; clip-path: polygon(0 0, 100% 0, 50% 100%); }
.face { width: 112px; }
.size { width: 43px; margin-left: -1px; }
.general { width: 131px; }
.grow, .shrink { align-items: flex-start; font-size: 14px; line-height: 24px; font-weight: 600; color: #555; }
.shrink { font-size: 12px; }
.grow svg, .shrink svg { margin-top: 4px; }
.strong { font-weight: 700; color: #444; }
.ital { font: italic 700 13px "Liberation Serif", serif; color: #444; }
.under { font-weight: 700; text-decoration: underline; color: #444; }
.align .tools { padding-left: 8px; }
.align .sep { margin: 0 4px; }
.wrapmerge { margin-left: 6px; padding-left: 7px; border-left: 1px solid #c8c8c8; align-items: flex-start; height: 61px; }
.wrapmerge .row { gap: 2px; }
.wrapmerge .caret { margin-left: 7px; }
.number .tools { padding-left: 8px; }
.number .caret { margin: 0 6px 0 3px; }
.number .sep { margin: 0 3px 0 4px; }
.pct { font-size: 16px; }
.thou { font-size: 10px; }
.number .row button.dec { flex-direction: column; font-size: 8px; line-height: 11px; color: #444; align-items: flex-end; padding-right: 3px; }
.dec span { display: flex; align-items: center; }
.collapse { margin: auto 8px 2px auto; }

/* Formula bar */
.formula { display: flex; flex: none; height: 46px; padding: 10px 6px 10px 5px; }
.namebox, .fx, .bar { display: flex; align-items: center; height: 26px; background: #fff; border: 1px solid #c6c6c6; }
.namebox { width: 102px; padding: 0 6px; }
.namebox input { flex: 1; font-size: 12px; color: #444; }
.dots { align-self: center; width: 2px; height: 10px; margin: 0 14px; background: repeating-linear-gradient(#aaa 0 2px, transparent 2px 4px); }
.fx { width: 110px; margin-right: 3px; }
.fx button { flex: 1; }
.func { font: italic 400 16px "Liberation Serif", serif; color: #444; }
.func small { font-size: 12px; }
.bar { flex: 1; padding: 0 3px 0 11px; }
.bar input { flex: 1; font-size: 14px; color: #333; }

/* Worksheet */
.workspace { display: flex; flex: 1; min-height: 0; padding-right: 2px; }
.sheet { position: relative; display: flex; flex: 1; min-width: 0; overflow: hidden; border: 1px solid #999; background: #fff; }
.side { display: flex; flex-direction: column; flex: none; width: 186px; background: #404040; }
.block { height: 128px; background: #808080; }
.side nav { display: flex; flex-direction: column; padding-top: 10px; }
.side a { display: grid; place-items: center; height: 50px; padding-bottom: 2px; font: 20px/24px Lato, "Open Sans", sans-serif; color: #fff; text-decoration: none; }
.side a:first-child { height: 56px; padding-bottom: 6px; }
.side a.current { background: #fff; color: #111; }
.side a.sub { place-items: center end; height: 22px; margin: 9px 0 0 35px; padding: 0 9px 0 0; font-size: 14px; line-height: 18px; }
.side .sub + a:not(.sub) { margin-top: 8px; }
.side .sub ~ a:not(.sub) { height: 48px; }
.content { flex: 1; min-width: 0; padding: 0 61px 0 39px; font-family: Roboto, "Open Sans", sans-serif; }
.heading { display: flex; justify-content: space-between; height: 89px; }
h1 { width: 294px; height: 31px; margin: 32px 0 0; padding-left: 6px; background: #595959; color: #fff; font-size: 24px; line-height: 34px; font-weight: 500; }
.logo { display: flex; gap: 4px; padding-top: 11px; margin-right: -7px; color: #1f7a45; font-family: Lato, sans-serif; }
.logo div { display: flex; flex-direction: column; align-items: center; }
.logo strong { font-size: 41px; line-height: 45px; font-weight: 400; }
.logo span { font-size: 16px; line-height: 16px; }
table { width: 100%; table-layout: fixed; border-collapse: separate; border-spacing: 0; }
.c1 { width: 170px; } .c2 { width: 125px; } .c3 { width: 80px; } .c4 { width: 87px; }
.c5 { width: 105px; } .c6 { width: 116px; } .c7 { width: 122px; } .c8 { width: 61px; }
.c9 { width: 132px; } .c10 { width: 104px; } .c11 { width: 119px; }
th { position: relative; height: 38px; padding: 2px 0 0; background: #595959; color: #fff; font-size: 16px; line-height: 18px; font-weight: 500; }
th.mid { font-size: 15px; font-weight: 400; }
th.tiny { font-size: 13px; font-weight: 400; }
th.selected { outline: 2px solid #217346; outline-offset: -1px; box-shadow: inset 0 0 0 2px #fff; z-index: 2; }
th.selected::after { content: ""; position: absolute; right: -2px; bottom: -3px; width: 5px; height: 5px; background: #217346; box-shadow: 0 0 0 1px #fff; }
td { height: 32px; padding: 0; border: 0 solid #bfbfbf; border-width: 0 1px 1px 0; text-align: center; font-size: 14px; line-height: 20px; font-weight: 500; color: #111; }
.gap td { height: 7px; border-right: 0; }
tbody td:nth-child(1), tbody td:nth-child(2), tbody td:nth-child(9), tbody td:nth-child(10), tbody td:nth-child(11) { background: #d9d9d9; border-color: #a6a6a6; }
tbody td:nth-child(8) { border-right-color: #a6a6a6; }
tbody td:first-child { border-left-width: 1px; text-align: left; padding-left: 2px; font-size: 12px; }
tbody td:nth-child(2) { text-align: right; padding-right: 3px; }
.freeze-h, .freeze-v { position: absolute; background: #999; z-index: 1; }
.freeze-h { left: 0; right: 0; top: 127px; height: 1px; }
.freeze-v { left: 519px; top: 0; bottom: 0; width: 1px; }

/* Scroll bars */
.tri { width: 8px; height: 5px; background: #666; clip-path: polygon(50% 0, 100% 100%, 0 100%); }
.tri.down { clip-path: polygon(0 0, 100% 0, 50% 100%); }
.tri.left, .tri.right { width: 5px; height: 8px; clip-path: polygon(100% 0, 100% 100%, 0 50%); }
.tri.right { clip-path: polygon(0 0, 100% 50%, 0 100%); }
.tri.faint { background: #b8b8b8; }
.vscroll { display: flex; flex-direction: column; flex: none; width: 16px; margin: 1px 0 0 4px; background: #d9d9d9; }
.vscroll button, .vscroll .thumb { height: 16px; background: #fff; border: 1px solid #ababab; }
.track { flex: 1; }
.hscroll { display: flex; flex: none; width: calc(38% - 6px); height: 15px; margin-right: 23px; background: #d9d9d9; }
.hscroll button { width: 15px; background: #fff; border: 1px solid #ababab; }
.hscroll .thumb { width: 73%; background: #fff; border: 1px solid #ababab; }

/* Sheet tabs */
.sheetbar { display: flex; align-items: center; flex: none; height: 27px; border-bottom: 1px solid #c0c0c0; }
.arrows { display: flex; gap: 24px; width: 100px; padding-left: 27px; }
.sheets { display: flex; align-self: stretch; }
.sheets button { width: 31px; height: 20px; margin-top: 3px; padding-bottom: 2px; border-right: 1px solid #999; font-size: 13px; color: #555; }
.sheets .double { width: 39px; border-left: 1px solid #999; }
.sheets .active { height: 25px; margin-top: -1px; padding: 2px 0 0; background: #fff; color: #217346; font-weight: 700; border-bottom: 2px solid #217346; }
.add { margin-left: 32px; }
.dots.push { margin-left: auto; margin-right: 15px; }

/* Status bar */
.status { display: flex; align-items: center; flex: none; height: 22px; padding-left: 7px; background: #f3f3f3; font-size: 11px; }
.status > span { margin-left: 2px; }
.views { display: flex; align-self: stretch; margin-left: auto; }
.views button { width: 40px; }
.zoomb { width: 9px; margin: 0 5px 0 6px; }
.status input { appearance: none; width: 100px; height: 11px; background: linear-gradient(#999, #999) center / 100% 1px no-repeat; }
.status input::-webkit-slider-thumb { appearance: none; width: 5px; height: 11px; background: #666; }
.status .pct100 { width: 38px; margin-left: 0; padding-right: 6px; text-align: right; }

/* Taskbar */
.taskbar { display: flex; flex: none; height: 40px; background: #d4d4d4; }
.taskbar button { position: relative; width: 48px; margin-right: 1px; }
.taskbar .start { margin-right: 3px; }
.open::after { content: ""; position: absolute; left: 4px; right: 4px; bottom: 0; height: 2px; background: #3483cb; }
.taskbar .active { background: #f0f0f0; }
.taskbar .active::after { left: 0; right: 0; }
.badge { position: absolute; left: 22px; top: 19px; width: 16px; height: 16px; border-radius: 50%; background: #c5632b; color: #fff; font-size: 11px; line-height: 16px; }
.clap { position: absolute; left: 15px; top: 17px; font-size: 10px; line-height: 14px; }
.clap b:nth-child(1) { color: #c5632b; }
.clap b:nth-child(2) { color: #2e79be; }
.clap b:nth-child(3) { color: #3f9b59; }
.tray { display: flex; align-items: center; gap: 9px; margin-left: auto; padding-right: 4px; }
.clock { display: flex; flex-direction: column; align-items: center; justify-content: center; gap: 2px; height: 40px; padding-right: 4px; border-right: 1px solid #aaa; }
```
